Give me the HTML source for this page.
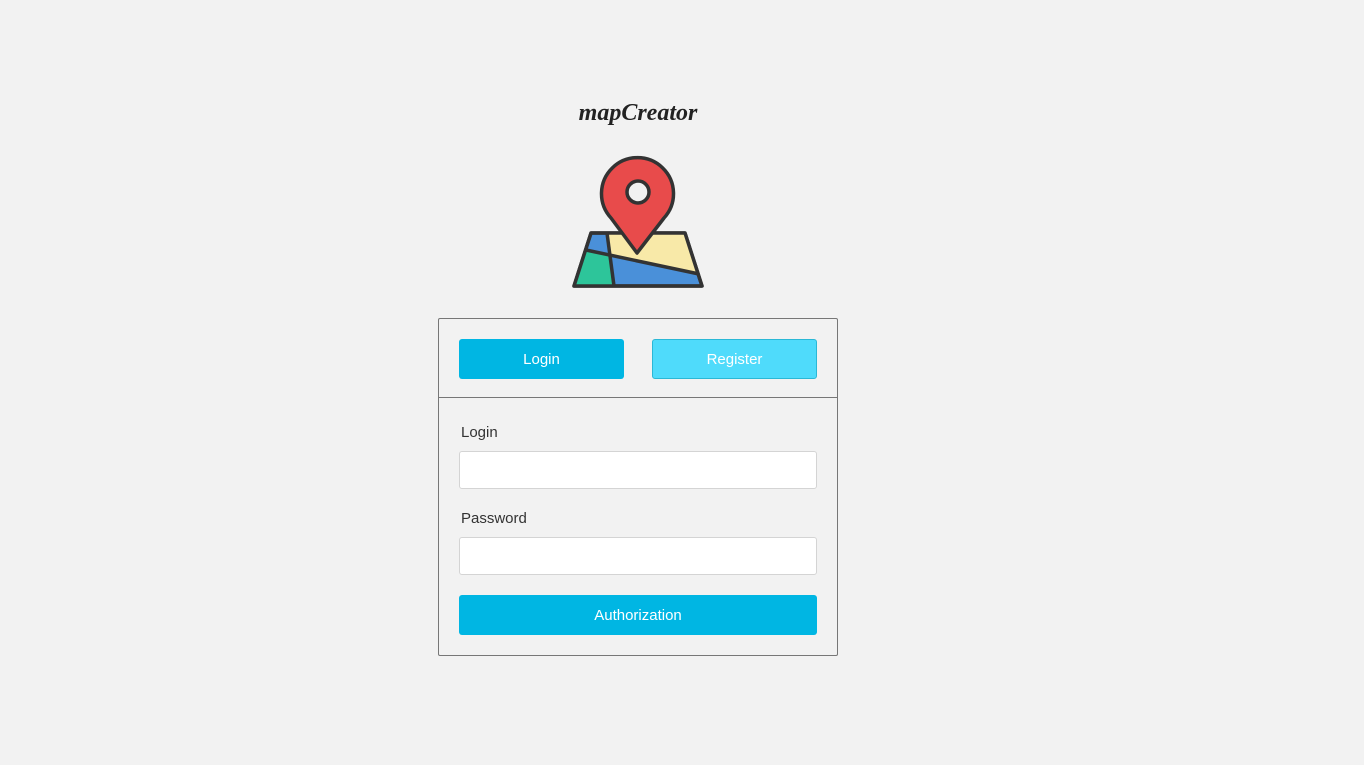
<!DOCTYPE html>
<html><head><meta charset="utf-8"><style>
html,body{margin:0;padding:0;background:#f2f2f2;width:1364px;height:765px;overflow:hidden;font-family:"Liberation Sans",sans-serif;}
.abs{position:absolute;}
.title{left:0;width:1276px;top:100px;text-align:center;font-family:"Liberation Serif",serif;font-style:italic;font-weight:bold;font-size:24px;color:#222;}
.box{left:438px;top:318px;width:398px;height:336px;border:1px solid #777;border-radius:2px;}
.sep{left:438px;top:397px;width:400px;height:1px;background:#777;}
.btn{border-radius:3px;color:#fff;font-size:15px;text-align:center;box-sizing:border-box;}
.lbl{font-size:15px;color:#333;}
.inp{background:#fff;border:1px solid #d4d4d4;border-radius:3px;box-sizing:border-box;}
</style></head><body>
<div class="abs title">mapCreator</div>
<svg class="abs" style="left:0;top:0" width="1364" height="320">
<g stroke="#333" stroke-width="3.5" stroke-linejoin="round">
<polygon points="591,233 685,233 702,286 574,286" fill="#4a90d9"/>
<polygon points="586,250 609.5,255 614,286 574,286" fill="#2dc59a" stroke="none"/>
<polygon points="607,233 685,233 699,274 609.5,255" fill="#f8e9a8" stroke="none"/>
<polygon points="591,233 685,233 702,286 574,286" fill="none"/>
<line x1="607" y1="233" x2="614" y2="286"/>
<line x1="586" y1="250" x2="699" y2="274"/>
<path d="M637,253 L611,218 A36,36 0 1,1 664,218 Z" fill="#e84b4b"/>
<circle cx="638" cy="192" r="11" fill="#f2f2f2"/>
</g>
</svg>
<div class="abs box"></div>
<div class="abs sep"></div>
<div class="abs btn" style="left:459px;top:339px;width:165px;height:40px;line-height:42px;background:#00b6e3;">Login</div>
<div class="abs btn" style="left:652px;top:339px;width:165px;height:40px;line-height:40px;background:#4fdbfb;border:1px solid #2ab8d6;">Register</div>
<div class="abs lbl" style="left:461px;top:424px;">Login</div>
<div class="abs inp" style="left:459px;top:451px;width:358px;height:38px;"></div>
<div class="abs lbl" style="left:461px;top:510px;">Password</div>
<div class="abs inp" style="left:459px;top:537px;width:358px;height:38px;"></div>
<div class="abs btn" style="left:459px;top:595px;width:358px;height:40px;line-height:42px;background:#00b6e3;">Authorization</div>
</body></html>
